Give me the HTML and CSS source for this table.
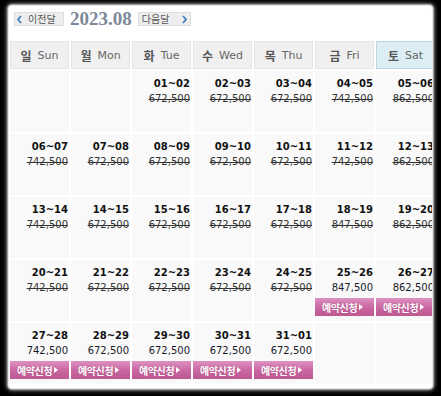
FILE: index.html
```html
<!DOCTYPE html>
<html lang="ko">
<head>
<meta charset="utf-8">
<title>2023.08</title>
<link rel="stylesheet" href="styles.css">
</head>
<body>
<div class="frame">
  <div class="paper">
    <div class="nav">
      <a class="nav-btn prev"><svg class="chev" viewBox="0 0 5 9" width="5" height="9"><path d="M4 1 L1 4.5 L4 8" fill="none" stroke="#3d7fc1" stroke-width="1.8"/></svg><span>이전달</span></a>
      <span class="title">2023.08</span>
      <a class="nav-btn next"><span>다음달</span><svg class="chev" viewBox="0 0 5 9" width="5" height="9"><path d="M1 1 L4 4.5 L1 8" fill="none" stroke="#3d7fc1" stroke-width="1.8"/></svg></a>
    </div>
    <div class="grid">
      <div class="head"><b>일</b><span>Sun</span></div>
      <div class="head"><b>월</b><span>Mon</span></div>
      <div class="head"><b>화</b><span>Tue</span></div>
      <div class="head"><b>수</b><span>Wed</span></div>
      <div class="head"><b>목</b><span>Thu</span></div>
      <div class="head"><b>금</b><span>Fri</span></div>
      <div class="head sat"><b>토</b><span>Sat</span></div>

      <div class="cell"></div>
      <div class="cell"></div>
      <div class="cell"><div class="d">01~02</div><div class="p s">672,500</div></div>
      <div class="cell"><div class="d">02~03</div><div class="p s">672,500</div></div>
      <div class="cell"><div class="d">03~04</div><div class="p s">672,500</div></div>
      <div class="cell"><div class="d">04~05</div><div class="p s">742,500</div></div>
      <div class="cell"><div class="d">05~06</div><div class="p s">862,500</div></div>

      <div class="cell"><div class="d">06~07</div><div class="p s">742,500</div></div>
      <div class="cell"><div class="d">07~08</div><div class="p s">672,500</div></div>
      <div class="cell"><div class="d">08~09</div><div class="p s">672,500</div></div>
      <div class="cell"><div class="d">09~10</div><div class="p s">672,500</div></div>
      <div class="cell"><div class="d">10~11</div><div class="p s">672,500</div></div>
      <div class="cell"><div class="d">11~12</div><div class="p s">742,500</div></div>
      <div class="cell"><div class="d">12~13</div><div class="p s">862,500</div></div>

      <div class="cell"><div class="d">13~14</div><div class="p s">742,500</div></div>
      <div class="cell"><div class="d">14~15</div><div class="p s">672,500</div></div>
      <div class="cell"><div class="d">15~16</div><div class="p s">672,500</div></div>
      <div class="cell"><div class="d">16~17</div><div class="p s">672,500</div></div>
      <div class="cell"><div class="d">17~18</div><div class="p s">672,500</div></div>
      <div class="cell"><div class="d">18~19</div><div class="p s">847,500</div></div>
      <div class="cell"><div class="d">19~20</div><div class="p s">862,500</div></div>

      <div class="cell"><div class="d">20~21</div><div class="p s">742,500</div></div>
      <div class="cell"><div class="d">21~22</div><div class="p s">672,500</div></div>
      <div class="cell"><div class="d">22~23</div><div class="p s">672,500</div></div>
      <div class="cell"><div class="d">23~24</div><div class="p s">672,500</div></div>
      <div class="cell"><div class="d">24~25</div><div class="p s">672,500</div></div>
      <div class="cell"><div class="d">25~26</div><div class="p">847,500</div><a class="book">예약신청<i class="tri"></i></a></div>
      <div class="cell"><div class="d">26~27</div><div class="p">862,500</div><a class="book">예약신청<i class="tri"></i></a></div>

      <div class="cell"><div class="d">27~28</div><div class="p">742,500</div><a class="book">예약신청<i class="tri"></i></a></div>
      <div class="cell"><div class="d">28~29</div><div class="p">672,500</div><a class="book">예약신청<i class="tri"></i></a></div>
      <div class="cell"><div class="d">29~30</div><div class="p">672,500</div><a class="book">예약신청<i class="tri"></i></a></div>
      <div class="cell"><div class="d">30~31</div><div class="p">672,500</div><a class="book">예약신청<i class="tri"></i></a></div>
      <div class="cell"><div class="d">31~01</div><div class="p">672,500</div><a class="book">예약신청<i class="tri"></i></a></div>
      <div class="cell"></div>
      <div class="cell"></div>
    </div>
  </div>
</div>
</body>
</html>
```
FILE: styles.css
```css
html, body {
  margin: 0;
  padding: 0;
  background: #000;
}
body {
  width: 441px;
  height: 396px;
  overflow: hidden;
  font-family: "DejaVu Sans", "Noto Sans CJK KR", sans-serif;
}
.frame {
  box-sizing: border-box;
  width: 441px;
  height: 396px;
  padding: 6px 9px 8px 9px;
  background: #000;
}
.paper {
  height: 100%;
  background: #fff;
  overflow: hidden;
  border-radius: 3px;
  box-shadow: 0 0 0 1px #e6e6e6, 0 0 2px 2px #bbb, 0 0 4px 3px #555;
}
.nav {
  display: flex;
  align-items: center;
  height: 14px;
  margin: 6px 0 0 5px;
  white-space: nowrap;
}
.nav-btn {
  box-sizing: border-box;
  display: flex;
  align-items: center;
  height: 14px;
  background: #eeeeee;
  border: 1px solid #dcdcdc;
  font-family: "Noto Sans CJK KR", sans-serif;
  font-size: 10px;
  color: #555;
  line-height: 12px;
  white-space: nowrap;
  flex: none;
}
.nav-btn.prev {
  width: 50px;
  padding-left: 2px;
}
.nav-btn.prev span { margin-left: 6px; }
.nav-btn.next {
  width: 53px;
  padding: 0 3px 0 3px;
  justify-content: space-between;
}
.chev { display: block; flex: none; }
.title {
  font-family: "Liberation Serif", serif;
  font-weight: bold;
  font-size: 19px;
  line-height: 14px;
  color: #7d8898;
  margin: 0 6px 0 6px;
  flex: none;
}
.grid {
  display: grid;
  grid-template-columns: repeat(7, 59px);
  grid-template-rows: 28px repeat(5, 61px);
  gap: 2px;
  margin: 15px 0 0 1px;
}
.head {
  box-sizing: border-box;
  display: flex;
  align-items: center;
  justify-content: center;
  background: #f0f0f0;
  border: 1px solid #e4e4e4;
  color: #666;
  font-size: 11px;
  white-space: nowrap;
}
.head b {
  font-family: "Noto Sans CJK KR", sans-serif;
  font-size: 12px;
  font-weight: bold;
  color: #555;
  margin-right: 6px;
}
.head span { color: #666; }
.head.sat {
  background: #dcedf3;
  border-color: #b9d6e2;
}
.cell {
  background: #f9f9f9;
  padding-top: 5px;
  text-align: right;
  white-space: nowrap;
}
.d {
  font-size: 10px;
  font-weight: bold;
  line-height: 15px;
  color: #111;
  padding-right: 1px;
}
.p {
  font-size: 10px;
  line-height: 15px;
  color: #1a1a2a;
  padding-right: 1px;
}
.p.s {
  text-decoration: line-through;
  color: #333;
}
.book {
  box-sizing: border-box;
  display: flex;
  align-items: center;
  height: 18px;
  margin-top: 3px;
  padding-left: 7px;
  background: linear-gradient(#dd92c2, #c9659f 55%, #bd5891);
  color: #fff;
  font-family: "Noto Sans CJK KR", sans-serif;
  font-size: 10px;
  font-weight: bold;
  letter-spacing: -0.4px;
  text-shadow: 0 0 1px rgba(120, 30, 80, 0.5);
}
.tri {
  display: block;
  width: 0;
  height: 0;
  margin-left: 2px;
  border-left: 4px solid #fff;
  border-top: 3.5px solid transparent;
  border-bottom: 3.5px solid transparent;
}
```
